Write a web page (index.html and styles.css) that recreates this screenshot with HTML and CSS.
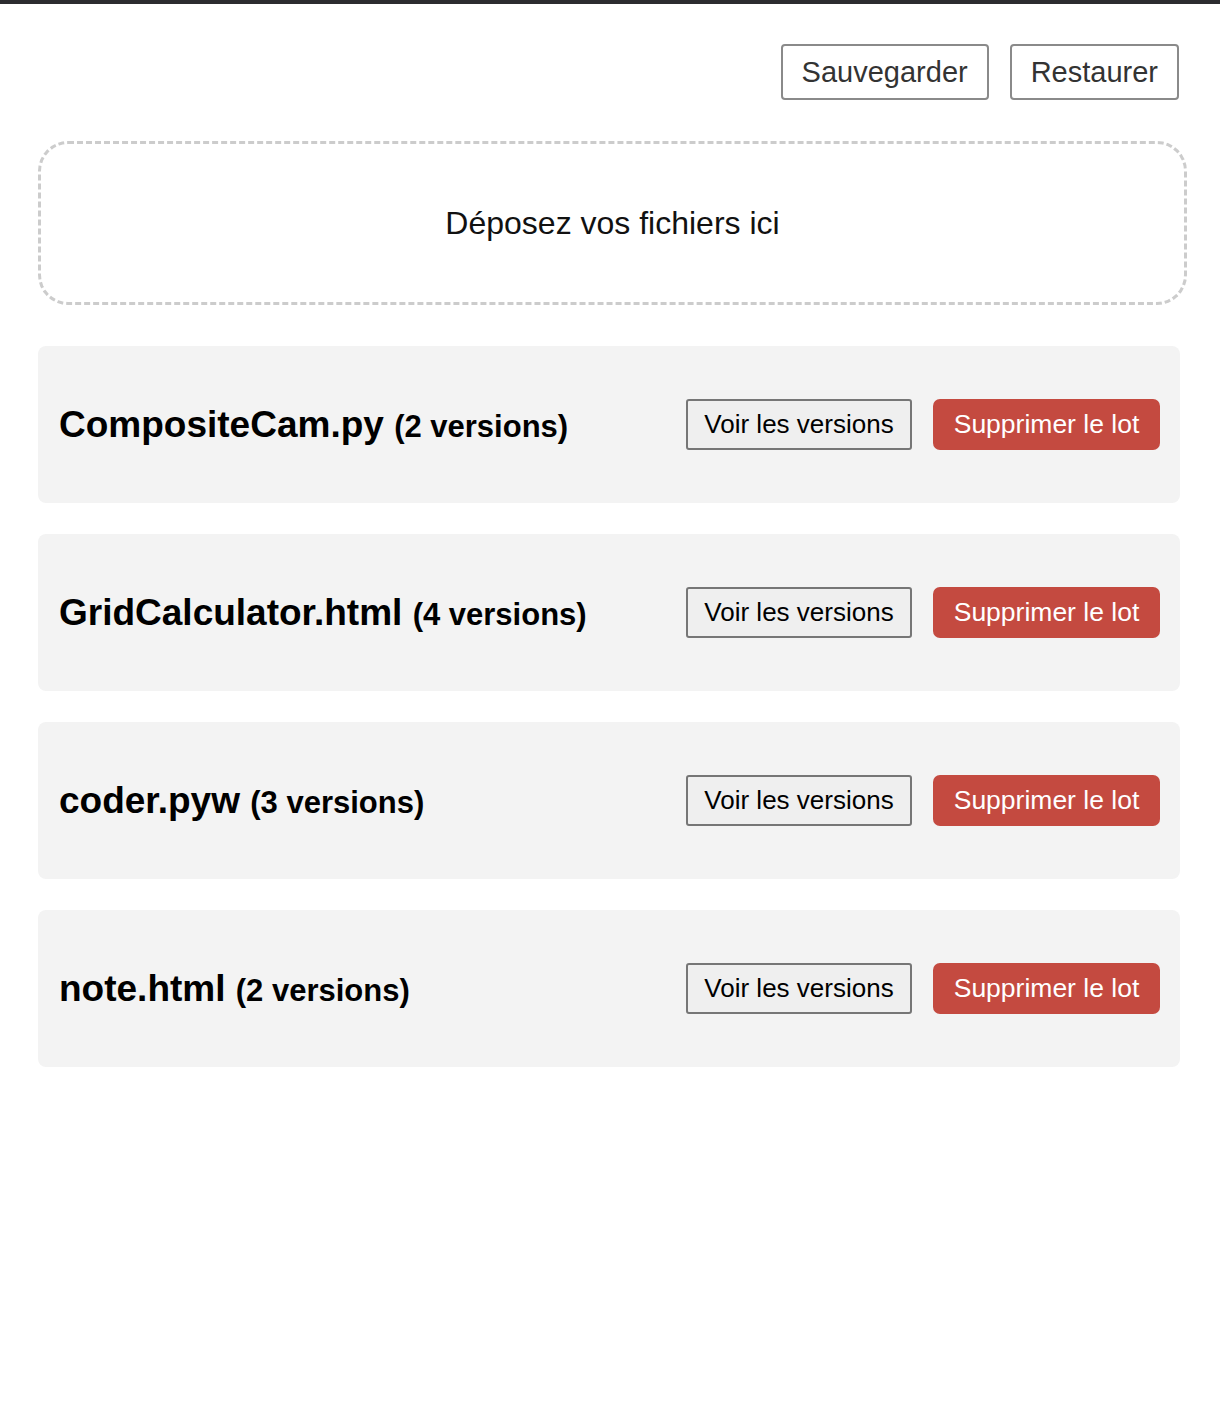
FILE: index.html
```html
<!DOCTYPE html>
<html lang="fr">
<head>
<meta charset="utf-8">
<title>Versions</title>
<link rel="stylesheet" href="styles.css">
</head>
<body>
<div class="topbar"></div>
<main class="page">
  <div class="toolbar">
    <button class="tool-btn">Sauvegarder</button>
    <button class="tool-btn">Restaurer</button>
  </div>
  <div class="dropzone">Déposez vos fichiers ici</div>
  <div class="list">
    <div class="card">
      <div class="title"><span class="name">CompositeCam.py</span> <span class="count">(2 versions)</span></div>
      <div class="actions">
        <button class="btn-view">Voir les versions</button>
        <button class="btn-delete">Supprimer le lot</button>
      </div>
    </div>
    <div class="card">
      <div class="title"><span class="name">GridCalculator.html</span> <span class="count">(4 versions)</span></div>
      <div class="actions">
        <button class="btn-view">Voir les versions</button>
        <button class="btn-delete">Supprimer le lot</button>
      </div>
    </div>
    <div class="card">
      <div class="title"><span class="name">coder.pyw</span> <span class="count">(3 versions)</span></div>
      <div class="actions">
        <button class="btn-view">Voir les versions</button>
        <button class="btn-delete">Supprimer le lot</button>
      </div>
    </div>
    <div class="card">
      <div class="title"><span class="name">note.html</span> <span class="count">(2 versions)</span></div>
      <div class="actions">
        <button class="btn-view">Voir les versions</button>
        <button class="btn-delete">Supprimer le lot</button>
      </div>
    </div>
  </div>
</main>
</body>
</html>
```
FILE: styles.css
```css
* { box-sizing: border-box; }
html, body { margin: 0; padding: 0; background: #fff; }
body { font-family: "Liberation Sans", Arial, sans-serif; color: #000; }

.topbar { height: 4px; background: #2c2c2f; }

.page { padding: 40px 40px 0 38px; }

.toolbar {
  display: flex;
  justify-content: flex-end;
  gap: 21px;
  padding-right: 1px;
}
.tool-btn {
  height: 56px;
  padding: 0 19px;
  font-family: inherit;
  font-size: 29px;
  color: #333;
  background: #fff;
  border: 2px solid #8a8a8a;
  border-radius: 4px;
}

.dropzone {
  margin-top: 41px;
  margin-right: -7px;
  height: 164px;
  border: 3px dashed #cccccc;
  border-radius: 30px;
  display: flex;
  align-items: center;
  justify-content: center;
  font-size: 32px;
  color: #111;
}

.list {
  margin-top: 41px;
  display: flex;
  flex-direction: column;
  gap: 31px;
}
.card {
  height: 157px;
  background: #f3f3f3;
  border-radius: 8px;
  padding: 0 20px 0 21px;
  display: flex;
  align-items: center;
  justify-content: space-between;
}
.title { font-weight: bold; white-space: nowrap; font-size: 37px; }
.name { font-size: 37px; }
.count { font-size: 31px; }

.actions { display: flex; gap: 21px; align-items: center; }
.btn-view {
  height: 51px;
  width: 226px;
  padding: 0;
  font-family: inherit;
  font-size: 26px;
  color: #000;
  background: #efefef;
  border: 2px solid #767676;
  border-radius: 3px;
}
.btn-delete {
  height: 51px;
  width: 227px;
  padding: 0;
  font-family: inherit;
  font-size: 26.5px;
  color: #fff;
  background: #c44a40;
  border: none;
  border-radius: 7px;
}
```
